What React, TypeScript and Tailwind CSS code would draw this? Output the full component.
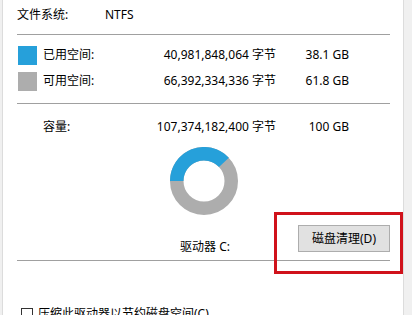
import React from "react";

const SizeRow = ({
  color,
  label,
  bytes,
  size,
  className = "",
}: {
  color?: string;
  label: string;
  bytes: string;
  size: string;
  className?: string;
}) => {
  return (
    <div className={`flex items-center h-[19px] ${className}`}>
      <div className={`ml-[15px] w-[19px] h-[19px] ${color ?? ""}`} />
      <div className="ml-[6px] w-[100px] -mt-[2px]">{label}</div>
      <div className="w-[133px] text-right -mt-[2px]">{bytes}</div>
      <div className="w-[73px] text-right -mt-[2px]">{size}</div>
    </div>
  );
};

const Donut = () => {
  return (
    <svg width="68" height="68" viewBox="0 0 68 68">
      <circle cx="34" cy="34" r="27.25" fill="none" stroke="#adadad" strokeWidth="13.5" />
      <path
        d="M 6.75 34 A 27.25 27.25 0 0 1 53.93 15.42"
        fill="none"
        stroke="#26a0da"
        strokeWidth="13.5"
      />
    </svg>
  );
};

export default function App() {
  return (
    <div className="relative w-[412px] h-[315px] overflow-hidden bg-[#f0f0f0] text-[12px] leading-[16px] text-black font-['Noto_Sans','Noto_Sans_CJK_SC',sans-serif]">
      <div className="ml-[2px] w-[402px] h-full bg-white border-x border-[#dcdcdc]">
        <div className="flex pt-[7px] pl-[14px]">
          <span className="w-[88px]">文件系统:</span>
          <span>NTFS</span>
        </div>
        <div className="mt-[11px] ml-[14px] w-[373px] h-px bg-[#a0a0a0]" />

        <SizeRow
          className="mt-[11px]"
          color="bg-[#26a0da]"
          label="已用空间:"
          bytes="40,981,848,064 字节"
          size="38.1 GB"
        />
        <SizeRow
          className="mt-[7px]"
          color="bg-[#adadad]"
          label="可用空间:"
          bytes="66,392,334,336 字节"
          size="61.8 GB"
        />
        <div className="mt-[12px] ml-[14px] w-[373px] h-px bg-[#a0a0a0]" />

        <SizeRow
          className="mt-[14px]"
          label="容量:"
          bytes="107,374,182,400 字节"
          size="100 GB"
        />

        <div className="mt-[10px] ml-[167px]">
          <Donut />
        </div>

        <div className="mt-[10px] flex items-end">
          <div className="ml-[157px] w-[90px] text-center">驱动器 C:</div>
          <button className="ml-[48px] mb-[3px] w-[92px] h-[27px] bg-[#e1e1e1] border border-[#adadad] text-[12px] leading-[16px]">
            磁盘清理(D)
          </button>
        </div>
        <div className="mt-[5px] ml-[14px] w-[373px] h-px bg-[#a0a0a0]" />

        <div className="mt-[45px] flex items-center">
          <div className="ml-[18px] w-[12px] h-[12px] border border-[#333333] bg-white" />
          <span className="ml-[5px]">压缩此驱动器以节约磁盘空间(C)</span>
        </div>
      </div>

      <div className="absolute left-[274px] top-[212px] w-[129px] h-[62px] border-[3px] border-[#d0121b]" />
    </div>
  );
}
